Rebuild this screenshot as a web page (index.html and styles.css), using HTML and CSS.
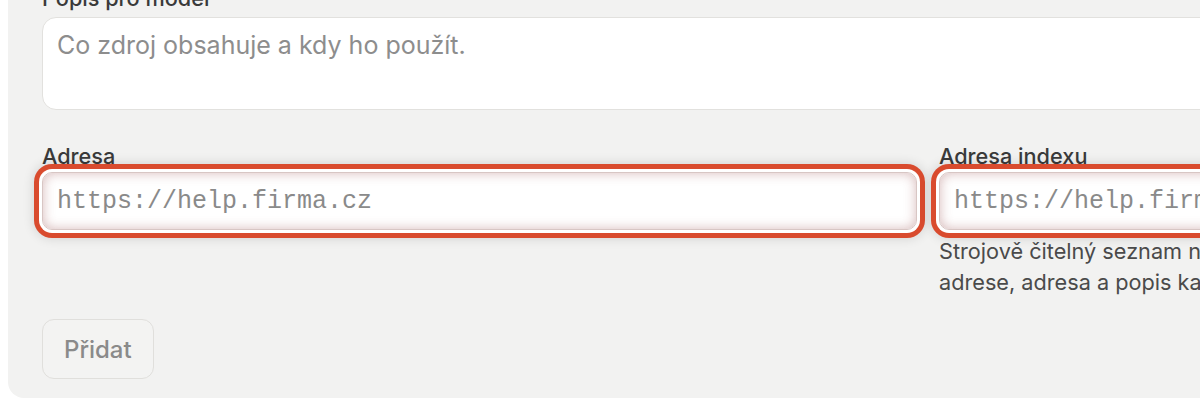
FILE: index.html
```html
<!DOCTYPE html>
<html lang="cs">
<head>
<meta charset="utf-8">
<title>Zdroj</title>
<link rel="stylesheet" href="styles.css">
</head>
<body>
<div class="panel">
  <div class="field">
    <label class="label" for="popis">Popis pro model</label>
    <textarea id="popis" class="textarea" placeholder="Co zdroj obsahuje a kdy ho použít."></textarea>
  </div>
  <div class="row">
    <div class="field">
      <label class="label" for="adresa">Adresa</label>
      <input id="adresa" class="input invalid" type="text" placeholder="https://help.firma.cz">
    </div>
    <div class="field">
      <label class="label" for="index">Adresa indexu</label>
      <input id="index" class="input invalid" type="text" placeholder="https://help.firma.cz/llms.txt">
      <p class="help">Strojově čitelný seznam nápovědních stránek (llms.txt) umístěný na stejné<br>adrese, adresa a popis každé stránky na samostatném řádku.</p>
    </div>
  </div>
  <div class="actions">
    <button class="button" type="button">Přidat</button>
  </div>
</div>
</body>
</html>
```
FILE: styles.css
```css
html, body {
  margin: 0;
  padding: 0;
  background: #ffffff;
  overflow: hidden;
  height: 400px;
}

body {
  font-family: Inter, "Noto Sans", sans-serif;
  color: #3a3a3a;
}

.panel {
  margin-left: 8px;
  margin-top: -14px;
  width: 1780px;
  height: 412px;
  box-sizing: border-box;
  background: #f2f2f1;
  border-bottom-left-radius: 16px;
  padding: 0 0 0 34px;
}

.field {
  display: flex;
  flex-direction: column;
}

.label {
  font-size: 21.7px;
  line-height: 24px;
  font-weight: 500;
  color: #3a3a3a;
  margin-bottom: 7px;
}

.textarea {
  box-sizing: border-box;
  width: 1772px;
  height: 93px;
  border: 1px solid #e2e1de;
  border-radius: 14px;
  background: #ffffff;
  padding: 11px 14px;
  resize: none;
  font-family: Inter, "Noto Sans", sans-serif;
  font-size: 25px;
  line-height: 32px;
  color: #3a3a3a;
  outline: none;
}

.textarea::placeholder {
  color: #8d8d8d;
}

.row {
  display: grid;
  grid-template-columns: 875px 875px;
  column-gap: 22px;
  margin-top: 34px;
}

.row .label {
  margin-bottom: 4px;
}

.input {
  box-sizing: border-box;
  width: 100%;
  height: 58px;
  border: 1px solid #d8c6c4;
  border-radius: 10px;
  background: #ffffff;
  padding: 0 14px;
  font-family: "Liberation Mono", "DejaVu Sans Mono", monospace;
  font-size: 25px;
  color: #3a3a3a;
  outline: none;
}

.input::placeholder {
  color: #8a8a8a;
}

.input.invalid {
  box-shadow:
    inset 0 0 12px rgba(150, 70, 70, 0.38),
    0 0 0 3px #ffffff,
    0 0 0 8px #d94b2e,
    0 0 12px 8px rgba(0, 0, 0, 0.14);
}

.help {
  margin: 6px 0 0;
  font-size: 21.7px;
  line-height: 31px;
  color: #4a4a4a;
  white-space: nowrap;
}

.actions {
  margin-top: 21px;
}

.button {
  box-sizing: border-box;
  height: 60px;
  padding: 0 21px;
  border: 1px solid #e0dfdc;
  border-radius: 12px;
  background: #f3f3f2;
  font-family: Inter, "Noto Sans", sans-serif;
  font-size: 24px;
  font-weight: 500;
  color: #8a8a8a;
}
```
